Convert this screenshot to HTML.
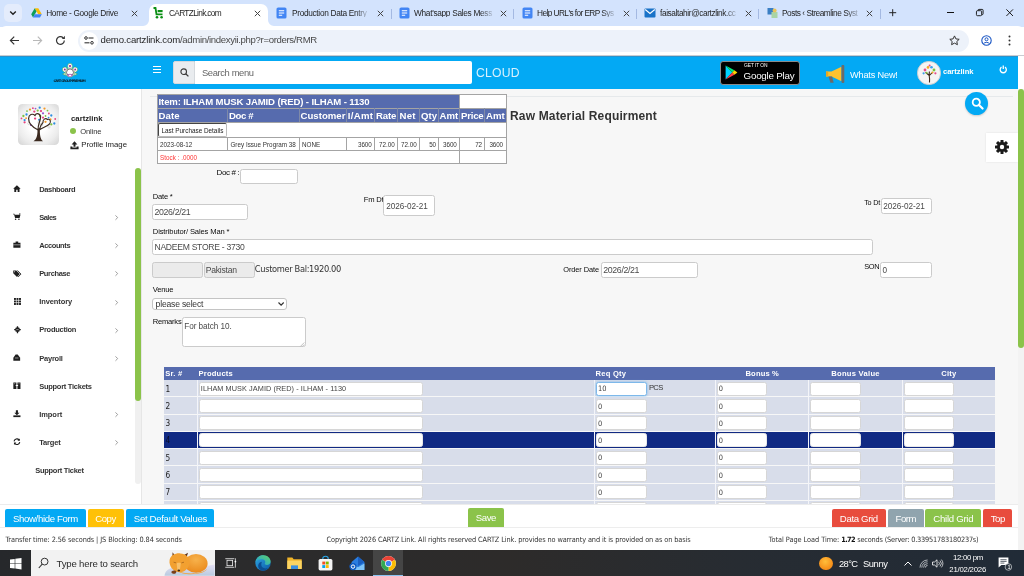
<!DOCTYPE html>
<html lang="en">
<head>
<meta charset="utf-8">
<title>CARTZLink.com</title>
<style>
*{box-sizing:border-box;margin:0;padding:0}
html,body{width:1024px;height:576px;overflow:hidden;background:#fff}
body{position:relative;font-family:"Liberation Sans",sans-serif;font-size:9px;color:#222}
.abs{position:absolute}
.t{position:absolute;white-space:nowrap;line-height:1}
svg{position:absolute;overflow:visible}
.f{position:absolute;border:1px solid #c9c9c9;border-radius:2px;background:#fff}
</style>
</head>
<body>
<div id="root" style="position:absolute;left:0;top:0;width:1024px;height:576px;overflow:hidden;will-change:transform">

<div class="abs" style="left:0px;top:0px;width:1024px;height:26.5px;background:#d3e3fd;"></div>
<div class="abs" style="left:4px;top:4px;width:18px;height:18px;background:#e4ecfc;border-radius:5px"></div>
<svg style="left:9px;top:10px" width="8" height="6" viewBox="0 0 8 6"><path d="M1.2 1.4 L4 4.2 L6.8 1.4" fill="none" stroke="#222" stroke-width="1.4"/></svg>
<div class="abs" style="left:148.5px;top:4px;width:119.2px;height:22.5px;background:#fff;border-radius:7px 7px 0 0"></div>
<svg style="left:142.5px;top:20.2px" width="6" height="6" viewBox="0 0 6 6"><path d="M6 0v6H0A6 6 0 0 0 6 0z" fill="#fff"/></svg>
<svg style="left:267.7px;top:20.2px" width="6" height="6" viewBox="0 0 6 6"><path d="M0 0v6h6A6 6 0 0 1 0 0z" fill="#fff"/></svg>
<svg style="left:31px;top:8px" width="11" height="10" viewBox="0 0 11 10"><path d="M3.7 0.3h3.6l3.5 6H7.2z" fill="#fbbc04"/><path d="M3.7 0.3L0.2 6.3l1.8 3.2L5.5 3.4z" fill="#0f9d58"/><path d="M2 9.5l1.8-3.2h7L9 9.5z" fill="#4285f4"/></svg>
<span class="t" style="left:46.20px;top:9.15px;font-size:8.30px;letter-spacing:-0.324px;color:#1f1f1f;font-family:'Liberation Sans',sans-serif;">Home - Google Drive</span>
<svg style="left:130.5px;top:9.5px" width="7" height="7" viewBox="0 0 7 7"><path d="M0.8 0.8l5.4 5.4M6.2 0.8l-5.4 5.4" stroke="#444" stroke-width="1"/></svg>
<svg style="left:153px;top:7px" width="11" height="12" viewBox="0 0 11 12"><path d="M0.5 1h2l1 6.3h6" fill="none" stroke="#0a8f14" stroke-width="1.8"/><rect x="4.6" y="3" width="5" height="2.2" fill="#0a8f14"/><circle cx="4" cy="10.3" r="1.3" fill="#0a8f14"/><circle cx="8.6" cy="10.3" r="1.3" fill="#0a8f14"/></svg>
<span class="t" style="left:169.00px;top:9.15px;font-size:8.30px;letter-spacing:-0.671px;color:#1f1f1f;font-family:'Liberation Sans',sans-serif;">CARTZLink.com</span>
<svg style="left:254px;top:9.5px" width="7" height="7" viewBox="0 0 7 7"><path d="M0.8 0.8l5.4 5.4M6.2 0.8l-5.4 5.4" stroke="#444" stroke-width="1"/></svg>
<svg style="left:275.8px;top:7px" width="11" height="12" viewBox="0 0 11 12"><rect x="0.5" y="0.5" width="10" height="11" rx="1.6" fill="#4285f4"/><path d="M2.8 3.8h5.4M2.8 6h5.4M2.8 8.2h3.4" stroke="#fff" stroke-width="1.1"/></svg>
<span class="t" style="left:292.00px;top:9.15px;font-size:8.30px;letter-spacing:-0.319px;color:#1f1f1f;font-family:'Liberation Sans',sans-serif;width:76px;overflow:hidden;-webkit-mask-image:linear-gradient(90deg,#000 84%,rgba(0,0,0,.15) 100%);">Production Data Entry</span>
<svg style="left:376.5px;top:9.5px" width="7" height="7" viewBox="0 0 7 7"><path d="M0.8 0.8l5.4 5.4M6.2 0.8l-5.4 5.4" stroke="#444" stroke-width="1"/></svg>
<div class="abs" style="left:391px;top:9px;width:1px;height:10px;background:#a4b9e2;"></div>
<svg style="left:399px;top:7px" width="11" height="12" viewBox="0 0 11 12"><rect x="0.5" y="0.5" width="10" height="11" rx="1.6" fill="#4285f4"/><path d="M2.8 3.8h5.4M2.8 6h5.4M2.8 8.2h3.4" stroke="#fff" stroke-width="1.1"/></svg>
<span class="t" style="left:414.00px;top:9.15px;font-size:8.30px;letter-spacing:-0.308px;color:#1f1f1f;font-family:'Liberation Sans',sans-serif;width:79px;overflow:hidden;-webkit-mask-image:linear-gradient(90deg,#000 84%,rgba(0,0,0,.15) 100%);">What'sapp Sales Mess</span>
<svg style="left:499.5px;top:9.5px" width="7" height="7" viewBox="0 0 7 7"><path d="M0.8 0.8l5.4 5.4M6.2 0.8l-5.4 5.4" stroke="#444" stroke-width="1"/></svg>
<div class="abs" style="left:513px;top:9px;width:1px;height:10px;background:#a4b9e2;"></div>
<svg style="left:522px;top:7px" width="11" height="12" viewBox="0 0 11 12"><rect x="0.5" y="0.5" width="10" height="11" rx="1.6" fill="#4285f4"/><path d="M2.8 3.8h5.4M2.8 6h5.4M2.8 8.2h3.4" stroke="#fff" stroke-width="1.1"/></svg>
<span class="t" style="left:537.00px;top:9.15px;font-size:8.30px;letter-spacing:-0.572px;color:#1f1f1f;font-family:'Liberation Sans',sans-serif;width:78px;overflow:hidden;-webkit-mask-image:linear-gradient(90deg,#000 84%,rgba(0,0,0,.15) 100%);">Help URL's for ERP Sys</span>
<svg style="left:622.5px;top:9.5px" width="7" height="7" viewBox="0 0 7 7"><path d="M0.8 0.8l5.4 5.4M6.2 0.8l-5.4 5.4" stroke="#444" stroke-width="1"/></svg>
<div class="abs" style="left:636px;top:9px;width:1px;height:10px;background:#a4b9e2;"></div>
<svg style="left:644px;top:8px" width="12" height="10" viewBox="0 0 12 10"><rect x="0.5" y="0.5" width="11" height="9" rx="1" fill="#1a73c8"/><path d="M1.2 1.5l4.8 4 4.8-4" fill="none" stroke="#fff" stroke-width="1.1"/></svg>
<span class="t" style="left:660.00px;top:9.15px;font-size:8.30px;letter-spacing:-0.396px;color:#1f1f1f;font-family:'Liberation Sans',sans-serif;width:77px;overflow:hidden;-webkit-mask-image:linear-gradient(90deg,#000 84%,rgba(0,0,0,.15) 100%);">faisaltahir@cartzlink.cc</span>
<svg style="left:744.5px;top:9.5px" width="7" height="7" viewBox="0 0 7 7"><path d="M0.8 0.8l5.4 5.4M6.2 0.8l-5.4 5.4" stroke="#444" stroke-width="1"/></svg>
<div class="abs" style="left:758px;top:9px;width:1px;height:10px;background:#a4b9e2;"></div>
<svg style="left:767px;top:7px" width="11" height="12" viewBox="0 0 11 12"><rect x="0.5" y="1" width="6" height="6.5" fill="#3b7fc4"/><rect x="4.5" y="5" width="6" height="6" fill="#a9d4a6"/><circle cx="7.6" cy="3.6" r="2" fill="#e8c25a"/></svg>
<span class="t" style="left:782.00px;top:9.15px;font-size:8.30px;letter-spacing:-0.468px;color:#1f1f1f;font-family:'Liberation Sans',sans-serif;width:77px;overflow:hidden;-webkit-mask-image:linear-gradient(90deg,#000 84%,rgba(0,0,0,.15) 100%);">Posts ‹ Streamline Syst</span>
<svg style="left:866px;top:9.5px" width="7" height="7" viewBox="0 0 7 7"><path d="M0.8 0.8l5.4 5.4M6.2 0.8l-5.4 5.4" stroke="#444" stroke-width="1"/></svg>
<div class="abs" style="left:880px;top:9px;width:1px;height:10px;background:#a4b9e2;"></div>
<svg style="left:889px;top:9.3px" width="7.4" height="7.4" viewBox="0 0 7.4 7.4"><path d="M3.700 0.200v7M0.200 3.700h7" stroke="#222" stroke-width="1"/></svg>
<div class="abs" style="left:947.3px;top:12.2px;width:7px;height:0.9px;background:#111;"></div>
<svg style="left:976.2px;top:9.3px" width="7.6" height="7.2" viewBox="0 0 7.6 7.2"><rect x="0.450" y="1.700" width="5.200" height="5" rx="1" fill="none" stroke="#111" stroke-width=".900"/><path d="M2 1.600V1.300a.9.9 0 0 1 .9-.9H6.200a.9.9 0 0 1 .9.900V4.800a.9.9 0 0 1-.9.900H5.800" fill="none" stroke="#111" stroke-width=".900"/></svg>
<svg style="left:1005.6px;top:9px" width="7.4" height="7.4" viewBox="0 0 7.4 7.4"><path d="M0.400 0.400l6.600 6.600M7 0.400l-6.600 6.600" stroke="#111" stroke-width=".950"/></svg>
<div class="abs" style="left:0px;top:26px;width:1024px;height:29.5px;background:#fff;border-radius:6px 6px 0 0"></div>
<div class="abs" style="left:0px;top:55px;width:1024px;height:1px;background:#c9ccd1;"></div>
<div class="abs" style="left:78px;top:29.5px;width:891.3px;height:22.5px;background:#edf2fa;border-radius:12px"></div>
<svg style="left:9px;top:35px" width="11" height="11" viewBox="0 0 11 11"><path d="M10 5.5H1.5M5.2 1.6L1.4 5.5l3.8 3.9" fill="none" stroke="#333" stroke-width="1.2"/></svg>
<svg style="left:32px;top:35px" width="11" height="11" viewBox="0 0 11 11"><path d="M1 5.5h8.5M5.8 1.6l3.8 3.9-3.8 3.9" fill="none" stroke="#b9b9b9" stroke-width="1.2"/></svg>
<svg style="left:55px;top:35px" width="11" height="11" viewBox="0 0 11 11"><path d="M9.3 5.5a3.9 3.9 0 1 1-1.2-2.8" fill="none" stroke="#333" stroke-width="1.2"/><path d="M9.9 0.8v3.1h-3.1z" fill="#333"/></svg>
<div class="abs" style="left:80px;top:31.5px;width:17.5px;height:18.5px;background:#fff;border-radius:9px"></div>
<svg style="left:84px;top:36px" width="10" height="9" viewBox="0 0 10 9"><circle cx="2" cy="2" r="1.3" fill="none" stroke="#333" stroke-width="1"/><path d="M4.5 2h5" stroke="#333" stroke-width="1.1"/><circle cx="8" cy="6.8" r="1.3" fill="none" stroke="#333" stroke-width="1"/><path d="M0.5 6.8h5" stroke="#333" stroke-width="1.1"/></svg>
<span class="t" style="left:100.50px;top:35.00px;font-size:9.60px;letter-spacing:-0.177px;color:#1f1f1f;font-family:'Liberation Sans',sans-serif;">demo.cartzlink.com</span>
<span class="t" style="left:180.00px;top:35.00px;font-size:9.60px;letter-spacing:-0.346px;color:#4a4a4a;font-family:'Liberation Sans',sans-serif;">/admin/indexyii.php?r=orders/RMR</span>
<svg style="left:949px;top:35px" width="11" height="11" viewBox="0 0 11 11"><path d="M5.5 0.9l1.4 3 3.3.4-2.4 2.2.6 3.2-2.9-1.6-2.9 1.6.6-3.2L0.8 4.3l3.3-.4z" fill="none" stroke="#333" stroke-width="1"/></svg>
<svg style="left:981px;top:35px" width="11" height="11" viewBox="0 0 11 11"><circle cx="5.5" cy="5.5" r="4.7" fill="none" stroke="#1a56c4" stroke-width="1.1"/><circle cx="5.5" cy="4.3" r="1.5" fill="none" stroke="#1a56c4" stroke-width="1"/><path d="M2.6 8.6c1-1.6 4.8-1.6 5.8 0" fill="none" stroke="#1a56c4" stroke-width="1"/></svg>
<svg style="left:1008px;top:35px" width="3" height="11" viewBox="0 0 3 11"><circle cx="1.5" cy="1.5" r="1" fill="#333"/><circle cx="1.5" cy="5.5" r="1" fill="#333"/><circle cx="1.5" cy="9.5" r="1" fill="#333"/></svg>
<div class="abs" style="left:0px;top:56px;width:1018px;height:32.5px;background:#03a9f4;"></div>
<div class="abs" style="left:0px;top:56px;width:1018px;height:0.6px;background:#2a93cc;"></div>
<div class="abs" style="left:1018px;top:56px;width:6px;height:494.3px;background:#f3f3f3;"></div>
<div class="abs" style="left:1018px;top:56px;width:6px;height:33px;background:#fff;"></div>
<svg style="left:62px;top:63px" width="16" height="16" viewBox="0 0 16 16"><g stroke="#3f9a3a" stroke-width=".5" fill="#fff">
<ellipse cx="8" cy="3.2" rx="2.4" ry="2.9"/><ellipse cx="2.9" cy="6.6" rx="2.4" ry="2.6" transform="rotate(-35 2.9 6.6)"/><ellipse cx="13.100" cy="6.600" rx="2.400" ry="2.600" transform="rotate(35 13.1 6.6)"/>
<path d="M0.600 11l3.400-1.500v3zM15.400 11L12 9.500v3z"/></g>
<circle cx="8" cy="9.600" r="4.600" fill="#fff" stroke="#3f9a3a" stroke-width=".400"/>
<circle cx="8" cy="3.100" r="1.100" fill="#9b2aa0"/><circle cx="2.800" cy="6.600" r="1" fill="#9b2aa0"/><circle cx="13.200" cy="6.600" r="1" fill="#9b2aa0"/>
<circle cx="8" cy="9.400" r="3.500" fill="#fff" stroke="#333" stroke-width=".700"/>
<path d="M5.300 12.600a2.900 2.900 0 0 1 5.400 0 3.400 3.400 0 0 1-5.400 0z" fill="#9b2aa0"/><ellipse cx="8" cy="12.500" rx="1.500" ry=".900" fill="#fff"/></svg>
<span class="t" style="left:53.40px;top:79.65px;font-size:3.30px;letter-spacing:-0.603px;color:#0d1a22;font-weight:bold;font-family:'DejaVu Sans',sans-serif;">CART GROUP PREMIUM</span>
<div class="abs" style="left:153px;top:66.2px;width:8px;height:1.2px;background:#fff;"></div>
<div class="abs" style="left:153px;top:69px;width:8px;height:1.2px;background:#fff;"></div>
<div class="abs" style="left:153px;top:71.8px;width:8px;height:1.2px;background:#fff;"></div>
<div class="abs" style="left:172.5px;top:61px;width:22px;height:22.5px;background:#e9ecef;border-radius:2px 0 0 2px;border:1px solid #d5d9dd"></div>
<svg style="left:179.5px;top:68px" width="9" height="9" viewBox="0 0 9 9"><circle cx="3.7" cy="3.7" r="2.8" fill="none" stroke="#3a3a3a" stroke-width="1.1"/><path d="M5.7 5.7l2.7 2.7" stroke="#3a3a3a" stroke-width="1.3"/></svg>
<div class="abs" style="left:194.5px;top:61px;width:277.5px;height:22.5px;background:#fff;border-radius:0 2px 2px 0"></div>
<span class="t" style="left:202.00px;top:68.10px;font-size:9.40px;letter-spacing:-0.383px;color:#666;font-family:'Liberation Sans',sans-serif;">Search menu</span>
<span class="t" style="left:476.00px;top:67.20px;font-size:12.20px;letter-spacing:0.199px;color:#d9f1fd;font-family:'Liberation Sans',sans-serif;">CLOUD</span>
<div class="abs" style="left:719.6px;top:61px;width:80.8px;height:23.5px;background:#000;border-radius:3px;border:.6px solid #8a8a8a"></div>
<svg style="left:725px;top:65px" width="13" height="15" viewBox="0 0 13 15"><path d="M0.6 0.6v13.8l6.6-6.9z" fill="#00d2ff"/><path d="M0.6 0.6l6.6 6.9 2.2-2.3z" fill="#00e676"/><path d="M0.6 14.4l6.6-6.9 2.2 2.3z" fill="#ff3d47"/><path d="M9.4 5.2l3 2.3-3 2.3-2.2-2.3z" fill="#ffd400"/></svg>
<span class="t" style="left:744.00px;top:64.35px;font-size:4.90px;letter-spacing:-0.091px;color:#fff;font-family:'Liberation Sans',sans-serif;">GET IT ON</span>
<span class="t" style="left:743.50px;top:70.90px;font-size:9.80px;letter-spacing:-0.217px;color:#fff;font-family:'Liberation Sans',sans-serif;">Google Play</span>
<svg style="left:825px;top:64px" width="21" height="21" viewBox="0 0 21 21"><path d="M1 7.5h5.5l10-4.8v14.5l-10-4.8H1z" fill="#fdc22f"/>
<rect x="16.5" y="1" width="2.8" height="18" rx="1" fill="#6b6b6b"/>
<path d="M3.5 12.4h3.6l1.6 6.3H5.4z" fill="#6b6b6b"/>
<path d="M1 7.5h2.2v4.9H1z" fill="#e9a820"/></svg>
<span class="t" style="left:850.00px;top:70.70px;font-size:9.20px;letter-spacing:-0.179px;color:#fff;font-family:'Liberation Sans',sans-serif;">Whats New!</span>
<div class="abs" style="left:917px;top:61px;width:23.5px;height:23.5px;background:#f4f4f4;border-radius:50%;border:1px solid #d0d0d0"></div>
<svg style="left:920.5px;top:63.5px" width="17" height="19" viewBox="0 0 17 19"><path d="M8.5 18.5c.2-3 .1-5-.3-7-1-1.4-2.6-1.7-3.6-3.2M8.4 11.6c.6-1.6 2.4-2 3.6-3.6M8.3 12.5c-.2-2.2-.1-3.4.1-5" fill="none" stroke="#3a2618" stroke-width="1.1"/>
<circle cx="4" cy="6" r="1.4" fill="#e84a8a"/><circle cx="7" cy="3.4" r="1.3" fill="#f5a623"/><circle cx="10.5" cy="3.2" r="1.3" fill="#3aa0e8"/><circle cx="13" cy="6" r="1.4" fill="#7ac143"/><circle cx="2.6" cy="9.3" r="1.1" fill="#3aa0e8"/><circle cx="14.4" cy="9.3" r="1.1" fill="#e84a8a"/><circle cx="8.6" cy="1.4" r="1" fill="#e84a8a"/><circle cx="5.6" cy="8.8" r="1" fill="#7ac143"/><circle cx="11.4" cy="8.6" r="1" fill="#f5a623"/></svg>
<span class="t" style="left:943.00px;top:68.00px;font-size:7.60px;letter-spacing:-0.037px;color:#fff;font-weight:bold;font-family:'Liberation Sans',sans-serif;">cartzlink</span>
<svg style="left:999px;top:65px" width="8.5" height="8.5" viewBox="0 0 8.5 8.5"><path d="M2.5 2.1a3.1 3.1 0 1 0 3.5 0" fill="none" stroke="#fff" stroke-width="1.3"/><path d="M4.25 0.4v3.6" stroke="#fff" stroke-width="1.3"/></svg>
<div class="abs" style="left:0px;top:88.7px;width:141px;height:417px;background:#fff;"></div>
<div class="abs" style="left:141px;top:88.7px;width:1px;height:417px;background:#e6e6e6;"></div>
<div class="abs" style="left:18px;top:104.3px;width:40.6px;height:40.3px;background:#e4e4e4;border-radius:4.5px;background:radial-gradient(circle at 50% 48%,#ffffff 30%,#ececec 70%,#d2d2d2 100%)"></div>
<svg style="left:18px;top:104.3px" width="40.6" height="40.3" viewBox="0 0 40.6 40.3"><circle cx="14.9" cy="4.2" r="0.9" fill="#e6447f"/><circle cx="21.7" cy="3.7" r="1.15" fill="#2f8ee0"/><circle cx="26.5" cy="4.6" r="1.15" fill="#f39a2b"/><circle cx="9" cy="7.1" r="0.9" fill="#7cc242"/><circle cx="19.7" cy="6.6" r="1.15" fill="#7cc242"/><circle cx="23" cy="7.1" r="1.15" fill="#e6447f"/><circle cx="29.5" cy="6.6" r="0.9" fill="#7cc242"/><circle cx="8.5" cy="10.5" r="1.15" fill="#2f8ee0"/><circle cx="25" cy="9.3" r="1.15" fill="#9b59d0"/><circle cx="30.9" cy="9.5" r="0.9" fill="#e6447f"/><circle cx="33.3" cy="11.5" r="1.15" fill="#2f8ee0"/><circle cx="5.4" cy="12" r="1.15" fill="#7cc242"/><circle cx="3.5" cy="14.4" r="0.9" fill="#e6447f"/><circle cx="17.1" cy="14.6" r="1.15" fill="#e6447f"/><circle cx="22.2" cy="12" r="1.15" fill="#7cc242"/><circle cx="27.5" cy="12" r="0.9" fill="#7cc242"/><circle cx="25" cy="13.6" r="1.15" fill="#e6447f"/><circle cx="32.4" cy="15.4" r="1.15" fill="#f39a2b"/><circle cx="37.2" cy="15" r="0.9" fill="#e6447f"/><circle cx="36.3" cy="19.5" r="1.15" fill="#2f8ee0"/><circle cx="33.3" cy="20.4" r="1.15" fill="#7cc242"/><circle cx="8.1" cy="14.2" r="0.9" fill="#f39a2b"/><circle cx="6.6" cy="16.1" r="1.15" fill="#2f8ee0"/><circle cx="6.6" cy="18.3" r="1.15" fill="#e6447f"/><circle cx="12.9" cy="21.2" r="0.9" fill="#9b59d0"/><circle cx="27.5" cy="17.8" r="1.15" fill="#f39a2b"/><circle cx="21.2" cy="15.8" r="1.15" fill="#2f8ee0"/><circle cx="17.5" cy="4.6" r="0.9" fill="#9b59d0"/><circle cx="16.3" cy="7.6" r="1.15" fill="#e6447f"/><circle cx="12" cy="5.6" r="1.15" fill="#f39a2b"/><circle cx="30.6" cy="13.6" r="0.9" fill="#2f8ee0"/>
<g fill="none" stroke="#b9b2ae" stroke-width=".4"><circle cx="21.500" cy="18.500" r="1.700"/><circle cx="23.500" cy="21" r="1.300"/><circle cx="11" cy="19.500" r="1.300"/><circle cx="31" cy="23" r="1.200"/></g>
<path d="M20.200 26C16 24 10.500 20 10.600 14.500 10.700 10.500 14.500 9 17 11.500 18.500 8.500 23 9.500 22.500 14 22 18 19.500 21 20.200 26" fill="none" stroke="#3b2a20" stroke-width="1.200"/>
<path d="M21.200 26C22 23 23.500 20 25 18.500 24.500 15.500 27.500 13.500 29.500 15.500 32 14.500 33.500 17.500 31.500 20 29 22.500 24.500 23.500 21.200 26" fill="none" stroke="#3b2a20" stroke-width="1.100"/>
<path d="M15.500 37.200C19 35.600 19.700 30 19.500 24.600L21.900 24.600C21.700 30 22.200 35.400 25 37.200z" fill="#3b2a20"/></svg>
<span class="t" style="left:71.00px;top:114.90px;font-size:7.80px;letter-spacing:-0.016px;color:#222;font-weight:bold;font-family:'Liberation Sans',sans-serif;">cartzlink</span>
<div class="abs" style="left:70.3px;top:128.3px;width:6px;height:6px;background:#8bc34a;border-radius:50%"></div>
<span class="t" style="left:80.30px;top:128.00px;font-size:7.60px;letter-spacing:-0.162px;color:#333;font-family:'Liberation Sans',sans-serif;">Online</span>
<svg style="left:70px;top:140.5px" width="9" height="8.5" viewBox="0 0 9 8.5"><path d="M4.5 0.3L1.6 3.4h1.9v2.4h2V3.4h1.9z" fill="#222"/><path d="M0.4 5.6h2v1h4.2v-1h2v2.7H0.4z" fill="#222"/></svg>
<span class="t" style="left:81.30px;top:140.90px;font-size:7.80px;letter-spacing:-0.020px;color:#222;font-family:'Liberation Sans',sans-serif;">Profile Image</span>
<span class="t" style="left:39.20px;top:186.05px;font-size:7.50px;letter-spacing:-0.353px;color:#333;font-weight:bold;font-family:'Liberation Sans',sans-serif;">Dashboard</span>
<span class="t" style="left:39.20px;top:214.05px;font-size:7.50px;letter-spacing:-0.520px;color:#333;font-weight:bold;font-family:'Liberation Sans',sans-serif;">Sales</span>
<svg style="left:115.3px;top:215px" width="3.2" height="5.2" viewBox="0 0 3.2 5.2"><path d="M0.5 0.4l2.2 2.2-2.2 2.2" fill="none" stroke="#909090" stroke-width=".9"/></svg>
<span class="t" style="left:39.20px;top:242.05px;font-size:7.50px;letter-spacing:-0.397px;color:#333;font-weight:bold;font-family:'Liberation Sans',sans-serif;">Accounts</span>
<svg style="left:115.3px;top:243.2px" width="3.2" height="5.2" viewBox="0 0 3.2 5.2"><path d="M0.5 0.4l2.2 2.2-2.2 2.2" fill="none" stroke="#909090" stroke-width=".9"/></svg>
<span class="t" style="left:39.20px;top:270.05px;font-size:7.50px;letter-spacing:-0.346px;color:#333;font-weight:bold;font-family:'Liberation Sans',sans-serif;">Purchase</span>
<svg style="left:115.3px;top:271.3px" width="3.2" height="5.2" viewBox="0 0 3.2 5.2"><path d="M0.5 0.4l2.2 2.2-2.2 2.2" fill="none" stroke="#909090" stroke-width=".9"/></svg>
<span class="t" style="left:39.20px;top:298.05px;font-size:7.50px;letter-spacing:-0.084px;color:#333;font-weight:bold;font-family:'Liberation Sans',sans-serif;">Inventory</span>
<svg style="left:115.3px;top:299.5px" width="3.2" height="5.2" viewBox="0 0 3.2 5.2"><path d="M0.5 0.4l2.2 2.2-2.2 2.2" fill="none" stroke="#909090" stroke-width=".9"/></svg>
<span class="t" style="left:39.20px;top:326.05px;font-size:7.50px;letter-spacing:-0.258px;color:#333;font-weight:bold;font-family:'Liberation Sans',sans-serif;">Production</span>
<svg style="left:115.3px;top:327.6px" width="3.2" height="5.2" viewBox="0 0 3.2 5.2"><path d="M0.5 0.4l2.2 2.2-2.2 2.2" fill="none" stroke="#909090" stroke-width=".9"/></svg>
<span class="t" style="left:39.20px;top:355.05px;font-size:7.50px;letter-spacing:-0.216px;color:#333;font-weight:bold;font-family:'Liberation Sans',sans-serif;">Payroll</span>
<svg style="left:115.3px;top:355.8px" width="3.2" height="5.2" viewBox="0 0 3.2 5.2"><path d="M0.5 0.4l2.2 2.2-2.2 2.2" fill="none" stroke="#909090" stroke-width=".9"/></svg>
<span class="t" style="left:39.20px;top:383.05px;font-size:7.50px;letter-spacing:-0.269px;color:#333;font-weight:bold;font-family:'Liberation Sans',sans-serif;">Support Tickets</span>
<span class="t" style="left:39.20px;top:411.05px;font-size:7.50px;letter-spacing:-0.055px;color:#333;font-weight:bold;font-family:'Liberation Sans',sans-serif;">Import</span>
<svg style="left:115.3px;top:412.2px" width="3.2" height="5.2" viewBox="0 0 3.2 5.2"><path d="M0.5 0.4l2.2 2.2-2.2 2.2" fill="none" stroke="#909090" stroke-width=".9"/></svg>
<span class="t" style="left:39.20px;top:439.05px;font-size:7.50px;letter-spacing:-0.144px;color:#333;font-weight:bold;font-family:'Liberation Sans',sans-serif;">Target</span>
<svg style="left:115.3px;top:440.3px" width="3.2" height="5.2" viewBox="0 0 3.2 5.2"><path d="M0.5 0.4l2.2 2.2-2.2 2.2" fill="none" stroke="#909090" stroke-width=".9"/></svg>
<span class="t" style="left:35.20px;top:467.05px;font-size:7.50px;letter-spacing:-0.276px;color:#333;font-weight:bold;font-family:'Liberation Sans',sans-serif;">Support Ticket</span>
<svg style="left:13.09px;top:184.55px" width="7.83" height="7.39" viewBox="0 0 9 8.5"><path d="M4.5 0.4L0.2 4.3h1.3v3.9h2.2V5.6h1.6v2.6h2.2V4.3h1.3z" fill="#1e1e1e"/></svg>
<svg style="left:13.09px;top:213.05px" width="7.83" height="7.39" viewBox="0 0 9 8.5"><path d="M0.2 0.8h1.3l.5 1.2h6.6l-1 3.8H2.4L1.2 1.6H.2z" fill="#1e1e1e"/><circle cx="3" cy="7.3" r=".9" fill="#1e1e1e"/><circle cx="6.8" cy="7.3" r=".9" fill="#1e1e1e"/><path d="M7.4 0.2l1.2.3-.4 1.5-1.2-.3z" fill="#1e1e1e"/></svg>
<svg style="left:13.09px;top:241.05px" width="7.83" height="7.39" viewBox="0 0 9 8.5"><path d="M3 0.6h3v1.3h2.6v6H0.4v-6H3z" fill="#1e1e1e"/><path d="M0.4 4.4h8.2" stroke="#fff" stroke-width=".6"/></svg>
<svg style="left:13.12px;top:269.55px" width="8.27" height="7.39" viewBox="0 0 9.5 8.5"><path d="M0.3 0.5h3.4l4.2 4.2-3.3 3.3L0.3 3.8z" fill="#1e1e1e"/><path d="M5 0.5l4.2 4.2-3.3 3.3" fill="none" stroke="#1e1e1e" stroke-width="1"/><circle cx="1.8" cy="2" r=".6" fill="#fff"/></svg>
<svg style="left:13.52px;top:297.82px" width="6.96" height="6.96" viewBox="0 0 8 8"><g fill="#1e1e1e"><rect x="0" y="0" width="2.2" height="2.2"/><rect x="2.9" y="0" width="2.2" height="2.2"/><rect x="5.8" y="0" width="2.2" height="2.2"/><rect x="0" y="2.9" width="2.2" height="2.2"/><rect x="2.9" y="2.9" width="2.2" height="2.2"/><rect x="5.8" y="2.9" width="2.2" height="2.2"/><rect x="0" y="5.8" width="2.2" height="2.2"/><rect x="2.9" y="5.8" width="2.2" height="2.2"/><rect x="5.8" y="5.8" width="2.2" height="2.2"/></g></svg>
<svg style="left:13.52px;top:325.55px" width="6.96" height="7.39" viewBox="0 0 8 8.5"><path d="M4 0.2v8.1M0.2 4.2h7.6" stroke="#1e1e1e" stroke-width="1.5"/><rect x="1.6" y="1.8" width="4.8" height="4.8" rx="1" fill="#1e1e1e"/><path d="M2.6 4.2h2.8" stroke="#fff" stroke-width=".6"/></svg>
<svg style="left:13.09px;top:353.72px" width="7.83" height="6.96" viewBox="0 0 9 8"><path d="M0.4 7.8V4.4L3 0.6h2.4l2.8 3.8v3.4z" fill="#1e1e1e"/><path d="M2.2 4.6h4" stroke="#fff" stroke-width=".6"/></svg>
<svg style="left:13.09px;top:381.85px" width="7.83" height="7.39" viewBox="0 0 9 8.5"><path d="M0.4 0.5h3.5v3h-.8v1h.8v3.5H0.4zM5.1 0.5h3.5v7.5H5.1V4.5h.8v-1h-.8z" fill="#1e1e1e"/><circle cx="2.1" cy="2" r=".5" fill="#fff"/><circle cx="6.9" cy="2" r=".5" fill="#fff"/></svg>
<svg style="left:13.09px;top:409.75px" width="7.83" height="7.39" viewBox="0 0 9 8.5"><path d="M3.3 0.3h2.4v3h1.8L4.5 6 1.5 3.3h1.8z" fill="#1e1e1e"/><rect x="0.4" y="6.2" width="8.2" height="2" fill="#1e1e1e"/></svg>
<svg style="left:13.09px;top:438.05px" width="7.83" height="7.39" viewBox="0 0 9 8.5"><path d="M1.2 3.8a3.3 3.3 0 0 1 5.8-1.6M7.8 4.8a3.3 3.3 0 0 1-5.8 1.5" fill="none" stroke="#1e1e1e" stroke-width="1.3"/><path d="M7.9 0.5v2.8H5.1zM1.1 8V5.2h2.8z" fill="#1e1e1e"/></svg>
<div class="abs" style="left:134.5px;top:400px;width:6.5px;height:84px;background:#f0f0f0;border-radius:0 0 3px 3px"></div>
<div class="abs" style="left:134.5px;top:168px;width:6.5px;height:233px;background:#8bc34a;border-radius:3px"></div>
<div class="abs" style="left:142px;top:88.7px;width:876px;height:416px;background:#f7f7f7;"></div>
<div class="abs" style="left:150px;top:95.8px;width:862.5px;height:1px;background:#e6e9eb;"></div>
<div class="abs" style="left:157px;top:94px;width:349.5px;height:70px;background:#fff;border:1px solid #a4a4a4"></div>
<div class="abs" style="left:158px;top:95px;width:301.5px;height:13px;background:#566bae;"></div>
<div class="abs" style="left:158px;top:108.3px;width:347.5px;height:14px;background:#566bae;"></div>
<div class="abs" style="left:157px;top:108px;width:349.5px;height:1px;background:#a4a4a4;"></div>
<div class="abs" style="left:157px;top:122.3px;width:349.5px;height:1px;background:#a4a4a4;"></div>
<div class="abs" style="left:157px;top:137.2px;width:349.5px;height:1px;background:#a4a4a4;"></div>
<div class="abs" style="left:157px;top:150.4px;width:349.5px;height:1px;background:#a4a4a4;"></div>
<div class="abs" style="left:459.3px;top:94px;width:1px;height:29px;background:#a4a4a4;"></div>
<div class="abs" style="left:459.3px;top:150.4px;width:1px;height:13.5px;background:#a4a4a4;"></div>
<div class="abs" style="left:227px;top:108.3px;width:1px;height:14px;background:#7f8aa8;"></div>
<div class="abs" style="left:227px;top:137.2px;width:1px;height:13.5px;background:#a4a4a4;"></div>
<div class="abs" style="left:299px;top:108.3px;width:1px;height:14px;background:#7f8aa8;"></div>
<div class="abs" style="left:299px;top:137.2px;width:1px;height:13.5px;background:#a4a4a4;"></div>
<div class="abs" style="left:346.3px;top:108.3px;width:1px;height:14px;background:#7f8aa8;"></div>
<div class="abs" style="left:346.3px;top:137.2px;width:1px;height:13.5px;background:#a4a4a4;"></div>
<div class="abs" style="left:374.3px;top:108.3px;width:1px;height:14px;background:#7f8aa8;"></div>
<div class="abs" style="left:374.3px;top:137.2px;width:1px;height:13.5px;background:#a4a4a4;"></div>
<div class="abs" style="left:397.3px;top:108.3px;width:1px;height:14px;background:#7f8aa8;"></div>
<div class="abs" style="left:397.3px;top:137.2px;width:1px;height:13.5px;background:#a4a4a4;"></div>
<div class="abs" style="left:419px;top:108.3px;width:1px;height:14px;background:#7f8aa8;"></div>
<div class="abs" style="left:419px;top:137.2px;width:1px;height:13.5px;background:#a4a4a4;"></div>
<div class="abs" style="left:438px;top:108.3px;width:1px;height:14px;background:#7f8aa8;"></div>
<div class="abs" style="left:438px;top:137.2px;width:1px;height:13.5px;background:#a4a4a4;"></div>
<div class="abs" style="left:459.3px;top:108.3px;width:1px;height:14px;background:#7f8aa8;"></div>
<div class="abs" style="left:459.3px;top:137.2px;width:1px;height:13.5px;background:#a4a4a4;"></div>
<div class="abs" style="left:484px;top:108.3px;width:1px;height:14px;background:#7f8aa8;"></div>
<div class="abs" style="left:484px;top:137.2px;width:1px;height:13.5px;background:#a4a4a4;"></div>
<span class="t" style="left:158.60px;top:97.00px;font-size:9.60px;letter-spacing:-0.141px;color:#fff;font-weight:bold;font-family:'Liberation Sans',sans-serif;">Item: ILHAM MUSK JAMID (RED) - ILHAM - 1130</span>
<span class="t" style="left:158.60px;top:111.00px;font-size:9.60px;letter-spacing:0.048px;color:#fff;font-weight:bold;font-family:'Liberation Sans',sans-serif;">Date</span>
<span class="t" style="left:228.90px;top:111.00px;font-size:9.60px;letter-spacing:-0.349px;color:#fff;font-weight:bold;font-family:'Liberation Sans',sans-serif;">Doc #</span>
<span class="t" style="left:300.50px;top:111.00px;font-size:9.60px;letter-spacing:0.024px;color:#fff;font-weight:bold;font-family:'Liberation Sans',sans-serif;">Customer</span>
<span class="t" style="left:347.80px;top:111.00px;font-size:9.60px;letter-spacing:0.280px;color:#fff;font-weight:bold;font-family:'Liberation Sans',sans-serif;">I/Amt</span>
<span class="t" style="left:376.10px;top:111.00px;font-size:9.60px;letter-spacing:-0.202px;color:#fff;font-weight:bold;font-family:'Liberation Sans',sans-serif;">Rate</span>
<span class="t" style="left:399.60px;top:111.00px;font-size:9.60px;letter-spacing:0.243px;color:#fff;font-weight:bold;font-family:'Liberation Sans',sans-serif;">Net</span>
<span class="t" style="left:421.00px;top:111.00px;font-size:9.60px;letter-spacing:-0.001px;color:#fff;font-weight:bold;font-family:'Liberation Sans',sans-serif;">Qty</span>
<span class="t" style="left:439.60px;top:111.00px;font-size:9.60px;letter-spacing:-0.022px;color:#fff;font-weight:bold;font-family:'Liberation Sans',sans-serif;">Amt</span>
<span class="t" style="left:461.00px;top:111.00px;font-size:9.60px;letter-spacing:-0.197px;color:#fff;font-weight:bold;font-family:'Liberation Sans',sans-serif;">Price</span>
<span class="t" style="left:486.00px;top:111.00px;font-size:9.60px;letter-spacing:-0.022px;color:#fff;font-weight:bold;font-family:'Liberation Sans',sans-serif;">Amt</span>
<div class="abs" style="left:158px;top:123.3px;width:68.8px;height:13.7px;background:#fff;border:1px solid #bbb;border-top-color:#444;border-left-color:#444;border-radius:2px"></div>
<span class="t" style="left:161.50px;top:127.60px;font-size:6.40px;letter-spacing:-0.012px;color:#222;font-family:'Liberation Sans',sans-serif;">Last Purchase Details</span>
<span class="t" style="left:160.10px;top:141.65px;font-size:6.30px;letter-spacing:-0.003px;color:#333;font-family:'Liberation Sans',sans-serif;">2023-08-12</span>
<span class="t" style="left:230.40px;top:141.65px;font-size:6.30px;letter-spacing:0.018px;color:#333;font-family:'Liberation Sans',sans-serif;">Grey Issue Program 38</span>
<span class="t" style="left:302.10px;top:141.65px;font-size:6.30px;letter-spacing:-0.051px;color:#333;font-family:'Liberation Sans',sans-serif;">NONE</span>
<span class="t" style="left:358.00px;top:141.65px;font-size:6.30px;letter-spacing:-0.104px;color:#333;font-family:'Liberation Sans',sans-serif;">3600</span>
<span class="t" style="left:379.00px;top:141.65px;font-size:6.30px;letter-spacing:-0.013px;color:#333;font-family:'Liberation Sans',sans-serif;">72.00</span>
<span class="t" style="left:401.10px;top:141.65px;font-size:6.30px;letter-spacing:-0.013px;color:#333;font-family:'Liberation Sans',sans-serif;">72.00</span>
<span class="t" style="left:429.20px;top:141.65px;font-size:6.30px;letter-spacing:-0.304px;color:#333;font-family:'Liberation Sans',sans-serif;">50</span>
<span class="t" style="left:443.10px;top:141.65px;font-size:6.30px;letter-spacing:-0.104px;color:#333;font-family:'Liberation Sans',sans-serif;">3600</span>
<span class="t" style="left:475.30px;top:141.65px;font-size:6.30px;letter-spacing:-0.304px;color:#333;font-family:'Liberation Sans',sans-serif;">72</span>
<span class="t" style="left:489.40px;top:141.65px;font-size:6.30px;letter-spacing:-0.104px;color:#333;font-family:'Liberation Sans',sans-serif;">3600</span>
<span class="t" style="left:160.10px;top:154.65px;font-size:6.30px;letter-spacing:0.017px;color:#f33;font-family:'Liberation Sans',sans-serif;">Stock : .0000</span>
<span class="t" style="left:510.00px;top:110.30px;font-size:12.00px;letter-spacing:0.158px;color:#333;font-weight:bold;font-family:'Liberation Sans',sans-serif;">Raw Material Requirment</span>
<div class="abs" style="left:965.4px;top:91.8px;width:22.8px;height:23px;background:#03a9f4;border-radius:50%;box-shadow:0 1px 2px rgba(0,0,0,.18)"></div>
<svg style="left:970.6px;top:97.3px" width="12.4" height="12.4" viewBox="0 0 12.4 12.4"><circle cx="5.3" cy="5.3" r="3.6" fill="none" stroke="#fff" stroke-width="1.8"/><path d="M8 8l3.6 3.6" stroke="#fff" stroke-width="2.2" stroke-linecap="round"/></svg>
<div class="abs" style="left:986.3px;top:132.7px;width:31.7px;height:29.2px;background:#fff;box-shadow:0 0 2px rgba(0,0,0,.10)"></div>
<svg style="left:995.3px;top:140px" width="14" height="14" viewBox="0 0 14 14"><g transform="translate(7 7)"><g fill="#1b1b1b"><rect x="-1.5" y="-7" width="3" height="14" rx=".5"/><rect x="-1.5" y="-7" width="3" height="14" rx=".5" transform="rotate(45)"/><rect x="-1.5" y="-7" width="3" height="14" rx=".5" transform="rotate(90)"/><rect x="-1.5" y="-7" width="3" height="14" rx=".5" transform="rotate(135)"/><circle r="5"/></g><circle r="2.2" fill="#fff"/></g></svg>
<div class="abs" style="left:1018.2px;top:88.5px;width:5.8px;height:259.8px;background:#8bc34a;border-radius:3px"></div>
<span class="t" style="left:216.50px;top:168.80px;font-size:8.00px;letter-spacing:-0.363px;color:#0a0a0a;font-family:'Liberation Sans',sans-serif;">Doc # :</span>
<div class="abs" style="left:240.3px;top:169.3px;width:57.3px;height:15.2px;background:#fff;border:1px solid #cbcbcb;border-radius:2.5px;"></div>
<span class="t" style="left:152.80px;top:193.00px;font-size:7.60px;letter-spacing:-0.237px;color:#0a0a0a;font-family:'Liberation Sans',sans-serif;">Date *</span>
<div class="abs" style="left:152.3px;top:204.3px;width:96px;height:15.3px;background:#fff;border:1px solid #cbcbcb;border-radius:2.5px;"></div>
<span class="t" style="left:154.50px;top:207.90px;font-size:8.80px;letter-spacing:-0.372px;color:#4a4a4a;font-family:'Liberation Sans',sans-serif;">2026/2/21</span>
<span class="t" style="left:363.80px;top:196.00px;font-size:7.60px;letter-spacing:-0.237px;color:#0a0a0a;font-family:'Liberation Sans',sans-serif;">Fm Dt</span>
<div class="abs" style="left:383.4px;top:195px;width:51.2px;height:21.2px;background:#fff;border:1px solid #cbcbcb;border-radius:2.5px;"></div>
<span class="t" style="left:386.30px;top:202.70px;font-size:8.20px;letter-spacing:-0.045px;color:#4a4a4a;font-family:'Liberation Sans',sans-serif;">2026-02-21</span>
<span class="t" style="left:864.20px;top:199.20px;font-size:7.20px;letter-spacing:-0.161px;color:#0a0a0a;font-family:'Liberation Sans',sans-serif;">To Dt</span>
<div class="abs" style="left:880.6px;top:197.8px;width:51.5px;height:16.4px;background:#fff;border:1px solid #cbcbcb;border-radius:2.5px;"></div>
<span class="t" style="left:883.30px;top:202.70px;font-size:8.20px;letter-spacing:-0.045px;color:#4a4a4a;font-family:'Liberation Sans',sans-serif;">2026-02-21</span>
<span class="t" style="left:152.80px;top:228.00px;font-size:7.60px;letter-spacing:-0.130px;color:#0a0a0a;font-family:'Liberation Sans',sans-serif;">Distributor/ Sales Man *</span>
<div class="abs" style="left:152.3px;top:239.3px;width:721px;height:15.3px;background:#fff;border:1px solid #cbcbcb;border-radius:2.5px;"></div>
<span class="t" style="left:154.50px;top:243.00px;font-size:8.60px;letter-spacing:-0.286px;color:#4a4a4a;font-family:'Liberation Sans',sans-serif;">NADEEM STORE - 3730</span>
<div class="abs" style="left:152.3px;top:262.3px;width:51.2px;height:15.3px;background:#ebebeb;border:1px solid #cbcbcb;border-radius:2.5px;"></div>
<div class="abs" style="left:204px;top:262.3px;width:51px;height:15.3px;background:#ebebeb;border:1px solid #cbcbcb;border-radius:2.5px;"></div>
<span class="t" style="left:205.80px;top:266.00px;font-size:8.60px;letter-spacing:-0.248px;color:#4a4a4a;font-family:'Liberation Sans',sans-serif;">Pakistan</span>
<span class="t" style="left:254.80px;top:265.15px;font-size:8.30px;letter-spacing:-0.348px;color:#333;font-family:'DejaVu Sans',sans-serif;">Customer Bal:1920.00</span>
<span class="t" style="left:563.30px;top:266.10px;font-size:7.40px;letter-spacing:-0.090px;color:#0a0a0a;font-family:'Liberation Sans',sans-serif;">Order Date</span>
<div class="abs" style="left:601px;top:262.3px;width:96.5px;height:15.3px;background:#fff;border:1px solid #cbcbcb;border-radius:2.5px;"></div>
<span class="t" style="left:603.30px;top:265.90px;font-size:8.80px;letter-spacing:-0.372px;color:#4a4a4a;font-family:'Liberation Sans',sans-serif;">2026/2/21</span>
<span class="t" style="left:864.30px;top:263.10px;font-size:7.40px;letter-spacing:-0.412px;color:#0a0a0a;font-family:'Liberation Sans',sans-serif;">SON</span>
<div class="abs" style="left:880px;top:262px;width:51.5px;height:15.6px;background:#fff;border:1px solid #cbcbcb;border-radius:2.5px;"></div>
<span class="t" style="left:882.40px;top:266.70px;font-size:8.20px;color:#4a4a4a;font-family:'Liberation Sans',sans-serif;">0</span>
<span class="t" style="left:152.80px;top:286.00px;font-size:7.60px;letter-spacing:-0.212px;color:#0a0a0a;font-family:'Liberation Sans',sans-serif;">Venue</span>
<div class="abs" style="left:152.3px;top:297.5px;width:134.5px;height:12.4px;background:#fff;border:1px solid #cbcbcb;border-radius:2.5px;border-radius:3px;border-color:#c4c4c4"></div>
<span class="t" style="left:155.60px;top:300.00px;font-size:8.60px;letter-spacing:-0.192px;color:#333;font-family:'Liberation Sans',sans-serif;">please select</span>
<svg style="left:278.3px;top:301.8px" width="6.2" height="4" viewBox="0 0 6.2 4"><path d="M0.5 0.5l2.6 2.6 2.6-2.6" fill="none" stroke="#333" stroke-width="1.2"/></svg>
<span class="t" style="left:152.80px;top:318.00px;font-size:7.60px;letter-spacing:-0.244px;color:#0a0a0a;font-family:'Liberation Sans',sans-serif;">Remarks</span>
<div class="abs" style="left:182px;top:317.3px;width:123.8px;height:29.6px;background:#fff;border:1px solid #cbcbcb;border-radius:2.5px;"></div>
<span class="t" style="left:184.20px;top:322.70px;font-size:8.20px;letter-spacing:-0.055px;color:#4a4a4a;font-family:'Liberation Sans',sans-serif;">For batch 10.</span>
<svg style="left:300px;top:341.5px" width="4.5" height="4.5" viewBox="0 0 4.5 4.5"><path d="M0.5 4.3L4.3 0.5M2.5 4.3L4.3 2.5" stroke="#999" stroke-width=".6"/></svg>
<div class="abs" style="left:164px;top:367.3px;width:831.3px;height:12.6px;background:#566bae;"></div>
<span class="t" style="left:165.30px;top:370.00px;font-size:7.60px;letter-spacing:0.229px;color:#fff;font-weight:bold;font-family:'Liberation Sans',sans-serif;">Sr. #</span>
<span class="t" style="left:198.50px;top:370.00px;font-size:7.60px;letter-spacing:0.195px;color:#fff;font-weight:bold;font-family:'Liberation Sans',sans-serif;">Products</span>
<span class="t" style="left:595.60px;top:370.00px;font-size:7.60px;letter-spacing:0.223px;color:#fff;font-weight:bold;font-family:'Liberation Sans',sans-serif;">Req Qty</span>
<span class="t" style="left:745.50px;top:370.00px;font-size:7.60px;letter-spacing:0.141px;color:#fff;font-weight:bold;font-family:'Liberation Sans',sans-serif;">Bonus %</span>
<span class="t" style="left:831.30px;top:370.00px;font-size:7.60px;letter-spacing:0.263px;color:#fff;font-weight:bold;font-family:'Liberation Sans',sans-serif;">Bonus Value</span>
<span class="t" style="left:941.30px;top:370.00px;font-size:7.60px;letter-spacing:0.160px;color:#fff;font-weight:bold;font-family:'Liberation Sans',sans-serif;">City</span>
<div class="abs" style="left:0;top:0;width:1024px;height:504px;overflow:hidden">
<div class="abs" style="left:164px;top:380px;width:831.3px;height:16.27px;background:#d8ddea;"></div>
<div class="abs" style="left:197px;top:379.7px;width:1.2px;height:17.27px;background:#f4f5f9;"></div>
<div class="abs" style="left:594.3px;top:379.7px;width:1.2px;height:17.27px;background:#f4f5f9;"></div>
<div class="abs" style="left:715.3px;top:379.7px;width:1.2px;height:17.27px;background:#f4f5f9;"></div>
<div class="abs" style="left:808.3px;top:379.7px;width:1.2px;height:17.27px;background:#f4f5f9;"></div>
<div class="abs" style="left:902.3px;top:379.7px;width:1.2px;height:17.27px;background:#f4f5f9;"></div>
<span class="t" style="left:165.60px;top:385.20px;font-size:8.20px;color:#222;font-family:'DejaVu Sans Condensed','DejaVu Sans',sans-serif;">1</span>
<div class="abs" style="left:198.5px;top:381.5px;width:224px;height:14px;background:#fff;border:1px solid #d6d6d6;border-radius:2.5px;"></div>
<div class="abs" style="left:596px;top:381.5px;width:50.6px;height:14px;background:#fff;border:1px solid #7db8ea;border-radius:2.5px;box-shadow:0 0 3px rgba(102,175,233,.8)"></div>
<div class="abs" style="left:716.8px;top:381.5px;width:50.4px;height:14px;background:#fff;border:1px solid #d6d6d6;border-radius:2.5px;"></div>
<div class="abs" style="left:810px;top:381.5px;width:50.6px;height:14px;background:#fff;border:1px solid #d6d6d6;border-radius:2.5px;"></div>
<div class="abs" style="left:903.8px;top:381.5px;width:50.4px;height:14px;background:#fff;border:1px solid #d6d6d6;border-radius:2.5px;"></div>
<span class="t" style="left:598.00px;top:385.10px;font-size:7.40px;color:#444;font-family:'DejaVu Sans Condensed','DejaVu Sans',sans-serif;">10</span>
<span class="t" style="left:718.80px;top:385.10px;font-size:7.40px;color:#444;font-family:'DejaVu Sans Condensed','DejaVu Sans',sans-serif;">0</span>
<span class="t" style="left:200.80px;top:385.15px;font-size:7.30px;letter-spacing:0.077px;color:#444;font-family:'Liberation Sans',sans-serif;">ILHAM MUSK JAMID (RED) - ILHAM - 1130</span>
<span class="t" style="left:649.00px;top:384.00px;font-size:7.60px;letter-spacing:-0.709px;color:#333;font-family:'Liberation Sans',sans-serif;">PCS</span>
<div class="abs" style="left:164px;top:397.27px;width:831.3px;height:16.27px;background:#d8ddea;"></div>
<div class="abs" style="left:197px;top:396.97px;width:1.2px;height:17.27px;background:#f4f5f9;"></div>
<div class="abs" style="left:594.3px;top:396.97px;width:1.2px;height:17.27px;background:#f4f5f9;"></div>
<div class="abs" style="left:715.3px;top:396.97px;width:1.2px;height:17.27px;background:#f4f5f9;"></div>
<div class="abs" style="left:808.3px;top:396.97px;width:1.2px;height:17.27px;background:#f4f5f9;"></div>
<div class="abs" style="left:902.3px;top:396.97px;width:1.2px;height:17.27px;background:#f4f5f9;"></div>
<span class="t" style="left:165.60px;top:402.20px;font-size:8.20px;color:#222;font-family:'DejaVu Sans Condensed','DejaVu Sans',sans-serif;">2</span>
<div class="abs" style="left:198.5px;top:398.77px;width:224px;height:14px;background:#fff;border:1px solid #d6d6d6;border-radius:2.5px;"></div>
<div class="abs" style="left:596px;top:398.77px;width:50.6px;height:14px;background:#fff;border:1px solid #d6d6d6;border-radius:2.5px;"></div>
<div class="abs" style="left:716.8px;top:398.77px;width:50.4px;height:14px;background:#fff;border:1px solid #d6d6d6;border-radius:2.5px;"></div>
<div class="abs" style="left:810px;top:398.77px;width:50.6px;height:14px;background:#fff;border:1px solid #d6d6d6;border-radius:2.5px;"></div>
<div class="abs" style="left:903.8px;top:398.77px;width:50.4px;height:14px;background:#fff;border:1px solid #d6d6d6;border-radius:2.5px;"></div>
<span class="t" style="left:598.00px;top:403.10px;font-size:7.40px;color:#444;font-family:'DejaVu Sans Condensed','DejaVu Sans',sans-serif;">0</span>
<span class="t" style="left:718.80px;top:403.10px;font-size:7.40px;color:#444;font-family:'DejaVu Sans Condensed','DejaVu Sans',sans-serif;">0</span>
<div class="abs" style="left:164px;top:414.54px;width:831.3px;height:16.27px;background:#d8ddea;"></div>
<div class="abs" style="left:197px;top:414.24px;width:1.2px;height:17.27px;background:#f4f5f9;"></div>
<div class="abs" style="left:594.3px;top:414.24px;width:1.2px;height:17.27px;background:#f4f5f9;"></div>
<div class="abs" style="left:715.3px;top:414.24px;width:1.2px;height:17.27px;background:#f4f5f9;"></div>
<div class="abs" style="left:808.3px;top:414.24px;width:1.2px;height:17.27px;background:#f4f5f9;"></div>
<div class="abs" style="left:902.3px;top:414.24px;width:1.2px;height:17.27px;background:#f4f5f9;"></div>
<span class="t" style="left:165.60px;top:419.20px;font-size:8.20px;color:#222;font-family:'DejaVu Sans Condensed','DejaVu Sans',sans-serif;">3</span>
<div class="abs" style="left:198.5px;top:416.04px;width:224px;height:14px;background:#fff;border:1px solid #d6d6d6;border-radius:2.5px;"></div>
<div class="abs" style="left:596px;top:416.04px;width:50.6px;height:14px;background:#fff;border:1px solid #d6d6d6;border-radius:2.5px;"></div>
<div class="abs" style="left:716.8px;top:416.04px;width:50.4px;height:14px;background:#fff;border:1px solid #d6d6d6;border-radius:2.5px;"></div>
<div class="abs" style="left:810px;top:416.04px;width:50.6px;height:14px;background:#fff;border:1px solid #d6d6d6;border-radius:2.5px;"></div>
<div class="abs" style="left:903.8px;top:416.04px;width:50.4px;height:14px;background:#fff;border:1px solid #d6d6d6;border-radius:2.5px;"></div>
<span class="t" style="left:598.00px;top:420.10px;font-size:7.40px;color:#444;font-family:'DejaVu Sans Condensed','DejaVu Sans',sans-serif;">0</span>
<span class="t" style="left:718.80px;top:420.10px;font-size:7.40px;color:#444;font-family:'DejaVu Sans Condensed','DejaVu Sans',sans-serif;">0</span>
<div class="abs" style="left:164px;top:431.81px;width:831.3px;height:16.27px;background:#112a83;"></div>
<div class="abs" style="left:197px;top:431.51px;width:1.2px;height:17.27px;background:#f4f5f9;"></div>
<div class="abs" style="left:594.3px;top:431.51px;width:1.2px;height:17.27px;background:#f4f5f9;"></div>
<div class="abs" style="left:715.3px;top:431.51px;width:1.2px;height:17.27px;background:#f4f5f9;"></div>
<div class="abs" style="left:808.3px;top:431.51px;width:1.2px;height:17.27px;background:#f4f5f9;"></div>
<div class="abs" style="left:902.3px;top:431.51px;width:1.2px;height:17.27px;background:#f4f5f9;"></div>
<span class="t" style="left:165.60px;top:436.20px;font-size:8.20px;color:#0a0f2a;font-family:'DejaVu Sans Condensed','DejaVu Sans',sans-serif;">4</span>
<div class="abs" style="left:198.5px;top:433.31px;width:224px;height:14px;background:#fff;border:1px solid #e9e9e9;border-radius:2.5px;"></div>
<div class="abs" style="left:596px;top:433.31px;width:50.6px;height:14px;background:#fff;border:1px solid #e9e9e9;border-radius:2.5px;"></div>
<div class="abs" style="left:716.8px;top:433.31px;width:50.4px;height:14px;background:#fff;border:1px solid #e9e9e9;border-radius:2.5px;"></div>
<div class="abs" style="left:810px;top:433.31px;width:50.6px;height:14px;background:#fff;border:1px solid #e9e9e9;border-radius:2.5px;"></div>
<div class="abs" style="left:903.8px;top:433.31px;width:50.4px;height:14px;background:#fff;border:1px solid #e9e9e9;border-radius:2.5px;"></div>
<span class="t" style="left:598.00px;top:437.10px;font-size:7.40px;color:#444;font-family:'DejaVu Sans Condensed','DejaVu Sans',sans-serif;">0</span>
<span class="t" style="left:718.80px;top:437.10px;font-size:7.40px;color:#444;font-family:'DejaVu Sans Condensed','DejaVu Sans',sans-serif;">0</span>
<div class="abs" style="left:164px;top:449.08px;width:831.3px;height:16.27px;background:#d8ddea;"></div>
<div class="abs" style="left:197px;top:448.78px;width:1.2px;height:17.27px;background:#f4f5f9;"></div>
<div class="abs" style="left:594.3px;top:448.78px;width:1.2px;height:17.27px;background:#f4f5f9;"></div>
<div class="abs" style="left:715.3px;top:448.78px;width:1.2px;height:17.27px;background:#f4f5f9;"></div>
<div class="abs" style="left:808.3px;top:448.78px;width:1.2px;height:17.27px;background:#f4f5f9;"></div>
<div class="abs" style="left:902.3px;top:448.78px;width:1.2px;height:17.27px;background:#f4f5f9;"></div>
<span class="t" style="left:165.60px;top:454.20px;font-size:8.20px;color:#222;font-family:'DejaVu Sans Condensed','DejaVu Sans',sans-serif;">5</span>
<div class="abs" style="left:198.5px;top:450.58px;width:224px;height:14px;background:#fff;border:1px solid #d6d6d6;border-radius:2.5px;"></div>
<div class="abs" style="left:596px;top:450.58px;width:50.6px;height:14px;background:#fff;border:1px solid #d6d6d6;border-radius:2.5px;"></div>
<div class="abs" style="left:716.8px;top:450.58px;width:50.4px;height:14px;background:#fff;border:1px solid #d6d6d6;border-radius:2.5px;"></div>
<div class="abs" style="left:810px;top:450.58px;width:50.6px;height:14px;background:#fff;border:1px solid #d6d6d6;border-radius:2.5px;"></div>
<div class="abs" style="left:903.8px;top:450.58px;width:50.4px;height:14px;background:#fff;border:1px solid #d6d6d6;border-radius:2.5px;"></div>
<span class="t" style="left:598.00px;top:454.10px;font-size:7.40px;color:#444;font-family:'DejaVu Sans Condensed','DejaVu Sans',sans-serif;">0</span>
<span class="t" style="left:718.80px;top:454.10px;font-size:7.40px;color:#444;font-family:'DejaVu Sans Condensed','DejaVu Sans',sans-serif;">0</span>
<div class="abs" style="left:164px;top:466.35px;width:831.3px;height:16.27px;background:#d8ddea;"></div>
<div class="abs" style="left:197px;top:466.05px;width:1.2px;height:17.27px;background:#f4f5f9;"></div>
<div class="abs" style="left:594.3px;top:466.05px;width:1.2px;height:17.27px;background:#f4f5f9;"></div>
<div class="abs" style="left:715.3px;top:466.05px;width:1.2px;height:17.27px;background:#f4f5f9;"></div>
<div class="abs" style="left:808.3px;top:466.05px;width:1.2px;height:17.27px;background:#f4f5f9;"></div>
<div class="abs" style="left:902.3px;top:466.05px;width:1.2px;height:17.27px;background:#f4f5f9;"></div>
<span class="t" style="left:165.60px;top:471.20px;font-size:8.20px;color:#222;font-family:'DejaVu Sans Condensed','DejaVu Sans',sans-serif;">6</span>
<div class="abs" style="left:198.5px;top:467.85px;width:224px;height:14px;background:#fff;border:1px solid #d6d6d6;border-radius:2.5px;"></div>
<div class="abs" style="left:596px;top:467.85px;width:50.6px;height:14px;background:#fff;border:1px solid #d6d6d6;border-radius:2.5px;"></div>
<div class="abs" style="left:716.8px;top:467.85px;width:50.4px;height:14px;background:#fff;border:1px solid #d6d6d6;border-radius:2.5px;"></div>
<div class="abs" style="left:810px;top:467.85px;width:50.6px;height:14px;background:#fff;border:1px solid #d6d6d6;border-radius:2.5px;"></div>
<div class="abs" style="left:903.8px;top:467.85px;width:50.4px;height:14px;background:#fff;border:1px solid #d6d6d6;border-radius:2.5px;"></div>
<span class="t" style="left:598.00px;top:472.10px;font-size:7.40px;color:#444;font-family:'DejaVu Sans Condensed','DejaVu Sans',sans-serif;">0</span>
<span class="t" style="left:718.80px;top:472.10px;font-size:7.40px;color:#444;font-family:'DejaVu Sans Condensed','DejaVu Sans',sans-serif;">0</span>
<div class="abs" style="left:164px;top:483.62px;width:831.3px;height:16.27px;background:#d8ddea;"></div>
<div class="abs" style="left:197px;top:483.32px;width:1.2px;height:17.27px;background:#f4f5f9;"></div>
<div class="abs" style="left:594.3px;top:483.32px;width:1.2px;height:17.27px;background:#f4f5f9;"></div>
<div class="abs" style="left:715.3px;top:483.32px;width:1.2px;height:17.27px;background:#f4f5f9;"></div>
<div class="abs" style="left:808.3px;top:483.32px;width:1.2px;height:17.27px;background:#f4f5f9;"></div>
<div class="abs" style="left:902.3px;top:483.32px;width:1.2px;height:17.27px;background:#f4f5f9;"></div>
<span class="t" style="left:165.60px;top:488.20px;font-size:8.20px;color:#222;font-family:'DejaVu Sans Condensed','DejaVu Sans',sans-serif;">7</span>
<div class="abs" style="left:198.5px;top:485.12px;width:224px;height:14px;background:#fff;border:1px solid #d6d6d6;border-radius:2.5px;"></div>
<div class="abs" style="left:596px;top:485.12px;width:50.6px;height:14px;background:#fff;border:1px solid #d6d6d6;border-radius:2.5px;"></div>
<div class="abs" style="left:716.8px;top:485.12px;width:50.4px;height:14px;background:#fff;border:1px solid #d6d6d6;border-radius:2.5px;"></div>
<div class="abs" style="left:810px;top:485.12px;width:50.6px;height:14px;background:#fff;border:1px solid #d6d6d6;border-radius:2.5px;"></div>
<div class="abs" style="left:903.8px;top:485.12px;width:50.4px;height:14px;background:#fff;border:1px solid #d6d6d6;border-radius:2.5px;"></div>
<span class="t" style="left:598.00px;top:489.10px;font-size:7.40px;color:#444;font-family:'DejaVu Sans Condensed','DejaVu Sans',sans-serif;">0</span>
<span class="t" style="left:718.80px;top:489.10px;font-size:7.40px;color:#444;font-family:'DejaVu Sans Condensed','DejaVu Sans',sans-serif;">0</span>
<div class="abs" style="left:164px;top:500.89px;width:831.3px;height:16.27px;background:#d8ddea;"></div>
<div class="abs" style="left:197px;top:500.59px;width:1.2px;height:17.27px;background:#f4f5f9;"></div>
<div class="abs" style="left:594.3px;top:500.59px;width:1.2px;height:17.27px;background:#f4f5f9;"></div>
<div class="abs" style="left:715.3px;top:500.59px;width:1.2px;height:17.27px;background:#f4f5f9;"></div>
<div class="abs" style="left:808.3px;top:500.59px;width:1.2px;height:17.27px;background:#f4f5f9;"></div>
<div class="abs" style="left:902.3px;top:500.59px;width:1.2px;height:17.27px;background:#f4f5f9;"></div>
<span class="t" style="left:165.60px;top:505.20px;font-size:8.20px;color:#222;font-family:'DejaVu Sans Condensed','DejaVu Sans',sans-serif;">8</span>
<div class="abs" style="left:198.5px;top:502.39px;width:224px;height:14px;background:#fff;border:1px solid #d6d6d6;border-radius:2.5px;"></div>
<div class="abs" style="left:596px;top:502.39px;width:50.6px;height:14px;background:#fff;border:1px solid #d6d6d6;border-radius:2.5px;"></div>
<div class="abs" style="left:716.8px;top:502.39px;width:50.4px;height:14px;background:#fff;border:1px solid #d6d6d6;border-radius:2.5px;"></div>
<div class="abs" style="left:810px;top:502.39px;width:50.6px;height:14px;background:#fff;border:1px solid #d6d6d6;border-radius:2.5px;"></div>
<div class="abs" style="left:903.8px;top:502.39px;width:50.4px;height:14px;background:#fff;border:1px solid #d6d6d6;border-radius:2.5px;"></div>
<span class="t" style="left:598.00px;top:506.10px;font-size:7.40px;color:#444;font-family:'DejaVu Sans Condensed','DejaVu Sans',sans-serif;">0</span>
<span class="t" style="left:718.80px;top:506.10px;font-size:7.40px;color:#444;font-family:'DejaVu Sans Condensed','DejaVu Sans',sans-serif;">0</span>
</div>
<div class="abs" style="left:0px;top:503.7px;width:1017.5px;height:47px;background:#fff;"></div>
<div class="abs" style="left:0px;top:503.7px;width:1017.5px;height:1px;background:#ececec;"></div>
<div class="abs" style="left:0px;top:526.8px;width:1017.5px;height:1px;background:#ededed;"></div>
<div class="abs" style="left:5px;top:509px;width:80.8px;height:17.8px;background:#03a9f4;border-radius:2px 2px 0 0"></div>
<span class="t" style="left:13.00px;top:514.00px;font-size:9.60px;letter-spacing:-0.350px;color:#fff;font-family:'Liberation Sans',sans-serif;">Show/hide Form</span>
<div class="abs" style="left:87.8px;top:509px;width:36.2px;height:17.8px;background:#ffc107;border-radius:2px 2px 0 0"></div>
<span class="t" style="left:95.30px;top:514.00px;font-size:9.60px;letter-spacing:-0.478px;color:#fff;font-family:'Liberation Sans',sans-serif;">Copy</span>
<div class="abs" style="left:125.5px;top:509px;width:88.8px;height:17.8px;background:#03a9f4;border-radius:2px 2px 0 0"></div>
<span class="t" style="left:133.80px;top:514.00px;font-size:9.60px;letter-spacing:-0.311px;color:#fff;font-family:'Liberation Sans',sans-serif;">Set Default Values</span>
<div class="abs" style="left:468px;top:507.5px;width:35.5px;height:19.3px;background:#8bc34a;border-radius:2px 2px 0 0"></div>
<span class="t" style="left:475.80px;top:513.00px;font-size:9.60px;letter-spacing:-0.421px;color:#fff;font-family:'Liberation Sans',sans-serif;">Save</span>
<div class="abs" style="left:832.3px;top:509px;width:53.5px;height:17.8px;background:#e84c3d;border-radius:2px 2px 0 0"></div>
<span class="t" style="left:839.80px;top:514.00px;font-size:9.60px;letter-spacing:-0.342px;color:#fff;font-family:'Liberation Sans',sans-serif;">Data Grid</span>
<div class="abs" style="left:888px;top:509px;width:35.5px;height:17.8px;background:#90a4ae;border-radius:2px 2px 0 0"></div>
<span class="t" style="left:895.50px;top:514.00px;font-size:9.60px;letter-spacing:-0.474px;color:#fff;font-family:'Liberation Sans',sans-serif;">Form</span>
<div class="abs" style="left:925.3px;top:509px;width:55.7px;height:17.8px;background:#8bc34a;border-radius:2px 2px 0 0"></div>
<span class="t" style="left:933.30px;top:514.00px;font-size:9.60px;letter-spacing:-0.268px;color:#fff;font-family:'Liberation Sans',sans-serif;">Child Grid</span>
<div class="abs" style="left:982.5px;top:509px;width:29.8px;height:17.8px;background:#e84c3d;border-radius:2px 2px 0 0"></div>
<span class="t" style="left:990.80px;top:514.00px;font-size:9.60px;letter-spacing:-0.493px;color:#fff;font-family:'Liberation Sans',sans-serif;">Top</span>
<span class="t" style="left:5.50px;top:536.15px;font-size:7.30px;letter-spacing:-0.089px;color:#333;font-family:'DejaVu Sans Condensed','DejaVu Sans',sans-serif;">Transfer time: 2.56 seconds | JS Blocking: 0.84 seconds</span>
<span class="t" style="left:326.50px;top:536.15px;font-size:7.30px;letter-spacing:-0.100px;color:#333;font-family:'DejaVu Sans Condensed','DejaVu Sans',sans-serif;">Copyright 2026 CARTZ Link. All rights reserved CARTZ Link. provides no warranty and it is provided on as on basis</span>
<span class="t" style="left:768.80px;top:536.15px;font-size:7.30px;letter-spacing:-0.042px;color:#333;font-family:'DejaVu Sans Condensed','DejaVu Sans',sans-serif;">Total Page Load Time: </span>
<span class="t" style="left:841.30px;top:536.15px;font-size:7.30px;letter-spacing:-0.626px;color:#111;font-weight:bold;font-family:'DejaVu Sans Condensed','DejaVu Sans',sans-serif;">1.72</span>
<span class="t" style="left:857.30px;top:536.15px;font-size:7.30px;letter-spacing:-0.192px;color:#333;font-family:'DejaVu Sans Condensed','DejaVu Sans',sans-serif;">seconds (Server: 0.33951783180237s)</span>
<div class="abs" style="left:0px;top:550.3px;width:1024px;height:25.7px;background:#262626;background:linear-gradient(90deg,#26282b 0,#2b2b2c 22%,#2d2b2a 50%,#272c32 72%,#212b37 100%)"></div>
<svg style="left:10px;top:558px" width="11.5" height="11.5" viewBox="0 0 11.5 11.5"><path d="M0 1.6l4.7-.7v4.5H0zM5.3.8L11.5 0v5.4H5.3zM0 6h4.7v4.5L0 9.9zM5.3 6h6.2v5.5l-6.2-.9z" fill="#fff"/></svg>
<div class="abs" style="left:30.5px;top:550.3px;width:184px;height:25.7px;background:#f2f2f2;"></div>
<svg style="left:38px;top:557px" width="11" height="12" viewBox="0 0 11 12"><circle cx="6.6" cy="4.6" r="3.4" fill="none" stroke="#333" stroke-width="1"/><path d="M4.2 7.2L0.8 11" stroke="#333" stroke-width="1.1"/></svg>
<span class="t" style="left:56.50px;top:559.00px;font-size:9.60px;letter-spacing:-0.176px;color:#2b2b2b;font-family:'Liberation Sans',sans-serif;">Type here to search</span>
<svg style="left:162px;top:550.3px" width="53" height="25.7" viewBox="0 0 53 25.7"><defs><radialGradient id="fb" cx=".5" cy=".3" r=".7"><stop offset="0" stop-color="#f7b24c"/><stop offset="1" stop-color="#ea8a1c"/></radialGradient>
<linearGradient id="cu" x1="0" y1="0" x2="0" y2="1"><stop offset="0" stop-color="#e4dff3"/><stop offset="1" stop-color="#b9cbe0"/></linearGradient></defs>
<path d="M2.500 25.700C3 20 9 16.500 18 16.500h20C46 16 52.600 14.500 52.600 14.500V25.700z" fill="url(#cu)"/>
<ellipse cx="34" cy="13.400" rx="11.600" ry="9.400" fill="url(#fb)"/>
<path d="M16 21c6 3.500 24 3.500 29-2 -3 6-24 7-29 2z" fill="#f3a23a"/>
<path d="M10.600 2.200l3 4.600-3.400 2.400zM26 2.800l-4.800 2.600 3 3z" fill="#5a2e14"/>
<path d="M7.600 10C8.600 5 13.600 3 18.300 3.400 23.600 3.800 28 7 27.600 12.500 27 18.500 22.500 22 18.300 22.300 12.500 22.600 6.500 17 7.600 10z" fill="#f2a030"/>
<path d="M14.600 13.200c1.500-.6 3-.6 4.200 0l-1 7.200h-2.400z" fill="#f8c06a"/>
<path d="M11.600 12.200l2.600.7M22 12.200l-2.600.7" stroke="#9a5a18" stroke-width=".700"/>
<ellipse cx="16.800" cy="20.600" rx="1.300" ry="1" fill="#3a2212"/>
<path d="M9.500 21.500c1.500-1.200 4-1.200 5 .2l-1 1.800c-1.400.6-3.200.2-4-.8z" fill="#7a3f1a"/></svg>
<svg style="left:224.5px;top:558px" width="12" height="10" viewBox="0 0 12 10"><rect x="2" y="2.3" width="5.600" height="5.400" fill="none" stroke="#f0f0f0" stroke-width=".800"/><path d="M0.300 0.700h9M0.300 9.300h9" stroke="#f0f0f0" stroke-width=".800"/><path d="M10.400 0.300v9.400" stroke="#f0f0f0" stroke-width=".800"/><circle cx="10.400" cy="3.600" r=".900" fill="#fff"/></svg>
<svg style="left:255px;top:555px" width="16" height="16" viewBox="0 0 16 16"><defs><linearGradient id="eg" x1="0" y1="0" x2="1" y2="1"><stop offset="0" stop-color="#2ea7e6"/><stop offset="1" stop-color="#0c59a4"/></linearGradient><linearGradient id="eg2" x1="0" y1="1" x2="1" y2="0"><stop offset="0" stop-color="#1b9de2"/><stop offset="1" stop-color="#5fd36a"/></linearGradient></defs>
<circle cx="8" cy="8" r="7.700" fill="url(#eg)"/>
<path d="M0.400 7.400C1 3 4.400 0.300 8.300 0.300c4.200 0 7.300 3 7.300 6.300 0 2.200-1.700 3.400-3.700 3.400-1.300 0-2.200-.5-2.200-1.200 0-.6.600-.8.600-1.800 0-1.500-1.400-2.800-3.500-2.800C4 4.200 1.400 5.300 0.400 7.400z" fill="url(#eg2)"/>
<path d="M6.300 9.800c0 2.600 2.700 4.600 6.700 3.200-1.700 2.500-4.900 3.200-7.400 2C3.300 13.800 2.600 11 3.600 9c.8-1.500 2.300-2.300 3.300-2.300-.4.800-.6 1.900-.6 3.100z" fill="#0b4f94"/></svg>
<svg style="left:287px;top:556px" width="15" height="14" viewBox="0 0 15 14"><path d="M0.3 1.4h5l1.4 1.8h8v9.600H0.3z" fill="#f0b429"/><path d="M0.3 4.600h14.400v8.400H0.3z" fill="#fcd462"/><rect x="4" y="9.400" width="7" height="3.600" fill="#3d8fe0"/></svg>
<svg style="left:318px;top:555px" width="15" height="16" viewBox="0 0 15 16"><path d="M4.800 4.200V3.400a2.700 2.200 0 0 1 5.400 0V4.200" fill="none" stroke="#2aa8e8" stroke-width="1.100"/><rect x="0.600" y="4" width="13.800" height="11.400" rx="1.600" fill="#f4f4f4"/><rect x="4.300" y="6.600" width="2.900" height="2.900" fill="#f25022"/><rect x="7.800" y="6.600" width="2.900" height="2.900" fill="#7fba00"/><rect x="4.300" y="10.100" width="2.900" height="2.900" fill="#00a4ef"/><rect x="7.800" y="10.100" width="2.900" height="2.900" fill="#ffb900"/></svg>
<svg style="left:349px;top:555px" width="16" height="16" viewBox="0 0 16 16"><path d="M2.600 7L9 1.400 15.400 7v8H2.600z" fill="#2a7de0"/><path d="M2.600 8.400l6.400 3.800 6.400-3.800V15H2.600z" fill="#7fc4f8"/><path d="M9 1.400L15.400 7 9 11z" fill="#1a5fc0"/><circle cx="4" cy="11.600" r="3.600" fill="#0f5ac0"/><circle cx="4" cy="11.600" r="1.700" fill="none" stroke="#fff" stroke-width="1"/></svg>
<div class="abs" style="left:373px;top:550.3px;width:30px;height:25.7px;background:#454545;"></div>
<div class="abs" style="left:373px;top:574.6px;width:30px;height:1.4px;background:#8cc4f2;"></div>
<svg style="left:380.5px;top:555.5px" width="15" height="15" viewBox="0 0 15 15"><circle cx="7.500" cy="7.500" r="7.400" fill="#fff"/><path d="M7.500 7.500L1.100 3.800A7.400 7.400 0 0 1 13.900 3.800z" fill="#ea4335"/><path d="M7.500 7.500l6.400-3.700A7.400 7.400 0 0 1 7.500 14.900z" fill="#fbbc04"/><path d="M7.500 7.500v7.400A7.400 7.400 0 0 1 1.100 3.800z" fill="#34a853"/><circle cx="7.500" cy="7.500" r="3.400" fill="#fff"/><circle cx="7.500" cy="7.500" r="2.700" fill="#4285f4"/></svg>
<div class="abs" style="left:819.3px;top:556.8px;width:13.4px;height:13.4px;background:#f59a1c;border-radius:50%;background:radial-gradient(circle at 45% 35%,#ffbe3b 0,#f7941d 60%,#ee7a12 100%)"></div>
<span class="t" style="left:839.00px;top:559.10px;font-size:9.40px;letter-spacing:-0.626px;color:#fff;font-family:'Liberation Sans',sans-serif;">28°C</span>
<span class="t" style="left:863.00px;top:559.10px;font-size:9.40px;letter-spacing:-0.431px;color:#fff;font-family:'Liberation Sans',sans-serif;">Sunny</span>
<svg style="left:903.5px;top:560.5px" width="8" height="5" viewBox="0 0 8 5"><path d="M0.500 4.500L4 1l3.500 3.500" fill="none" stroke="#fff" stroke-width="1"/></svg>
<svg style="left:918.5px;top:558.5px" width="9" height="9" viewBox="0 0 9 9"><path d="M1 8.600A7.600 7.600 0 0 1 8.600 1M2.800 8.600A5.800 5.800 0 0 1 8.600 2.800M4.600 8.600A4 4 0 0 1 8.600 4.600M6.400 8.600a2.200 2.200 0 0 1 2.200-2.200" fill="none" stroke="#cfd3d8" stroke-width=".800"/></svg>
<svg style="left:932px;top:558.5px" width="12" height="9" viewBox="0 0 12 9"><path d="M0.500 3h2L5 0.800v7.400L2.500 6h-2z" fill="none" stroke="#fff" stroke-width=".800"/><path d="M6.600 2.800a2.400 2.400 0 0 1 0 3.400M8 1.600a4.200 4.200 0 0 1 0 5.800M9.400 0.600a5.800 5.800 0 0 1 0 7.800" fill="none" stroke="#fff" stroke-width=".700"/></svg>
<span class="t" style="left:953.00px;top:553.90px;font-size:7.80px;letter-spacing:-0.315px;color:#fff;font-family:'Liberation Sans',sans-serif;">12:00 pm</span>
<span class="t" style="left:949.30px;top:565.90px;font-size:7.80px;letter-spacing:-0.234px;color:#fff;font-family:'Liberation Sans',sans-serif;">21/02/2026</span>
<svg style="left:998px;top:557px" width="14" height="14" viewBox="0 0 14 14"><path d="M0.600 0.600h9.800v7.400H3.400L0.600 10.400z" fill="#fff"/><path d="M2.400 2.700h6.200M2.400 4.400h6.200M2.400 6.100h4" stroke="#1f2a36" stroke-width=".700"/><circle cx="10.400" cy="10" r="3.300" fill="#2a333d" stroke="#d0d3d6" stroke-width=".700"/></svg>
<span class="t" style="left:1007.40px;top:564.50px;font-size:5.60px;color:#fff;font-family:'Liberation Sans',sans-serif;">1</span>
</div>
</body>
</html>
